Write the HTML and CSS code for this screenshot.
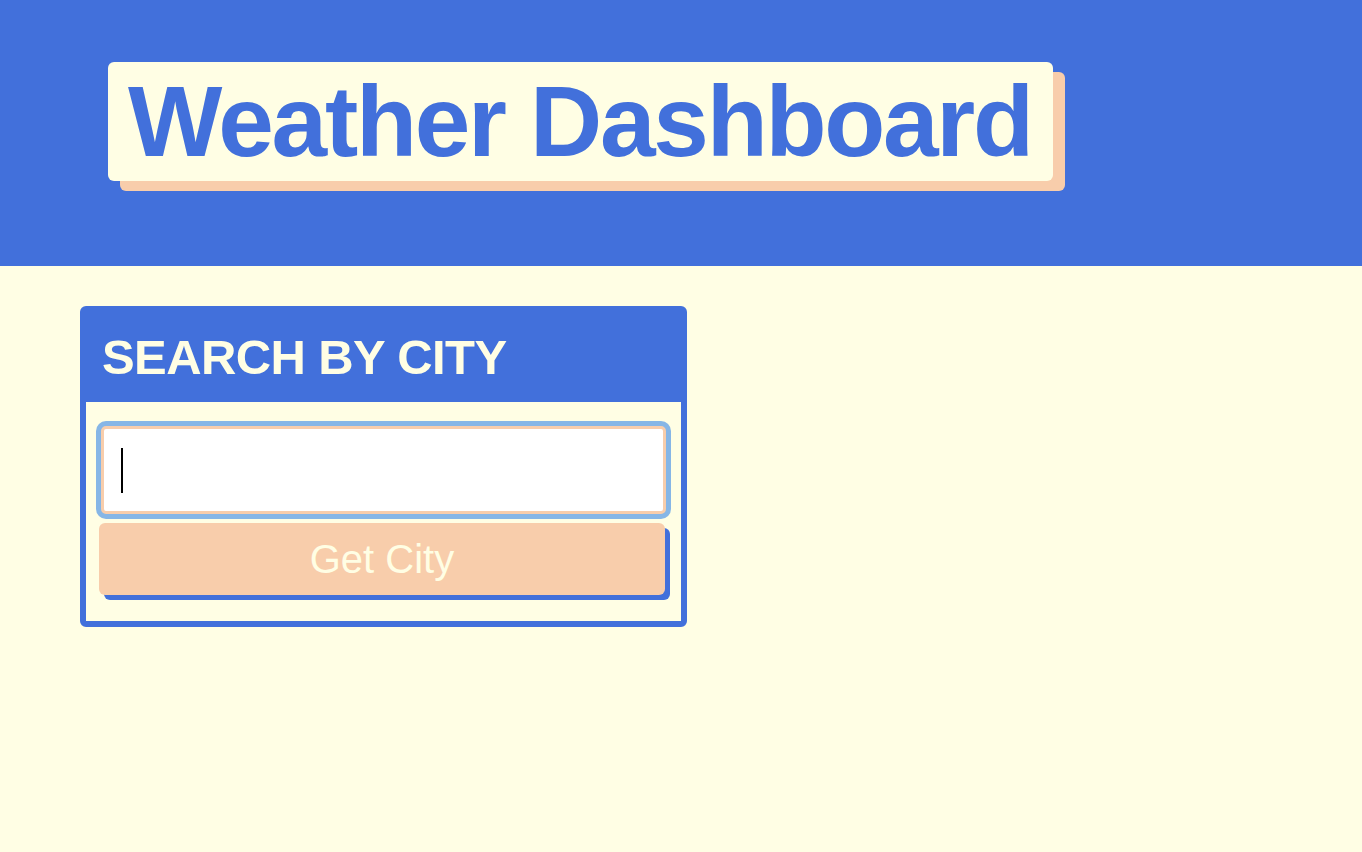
FILE: index.html
```html
<!DOCTYPE html>
<html lang="en">
<head>
<meta charset="utf-8">
<title>Weather Dashboard</title>
<link rel="stylesheet" href="styles.css">
</head>
<body>
<header class="topbar">
  <h1 class="title">Weather Dashboard</h1>
</header>
<main class="content">
  <section class="card">
    <h2 class="card-head">SEARCH BY CITY</h2>
    <form class="card-body">
      <div class="field">
        <input class="city-input" type="text" aria-label="City">
        <span class="caret"></span>
      </div>
      <button class="get-btn" type="button">Get City</button>
    </form>
  </section>
</main>
</body>
</html>
```
FILE: styles.css
```css
* { box-sizing: border-box; }
html, body {
  margin: 0;
  padding: 0;
  background: #FFFEE4;
  font-family: "Liberation Sans", Arial, sans-serif;
}
.topbar {
  background: #4270DB;
  height: 266px;
  padding: 62px 0 0 108px;
}
.title {
  display: inline-block;
  margin: 0;
  background: #FFFEE4;
  color: #4270DB;
  font-weight: 700;
  font-size: 100px;
  line-height: 115px;
  letter-spacing: -2.3px;
  padding: 2px 21px 2px 20px;
  border-radius: 6px;
  box-shadow: 12px 10px 0 #F8CDAB;
}
.content {
  padding: 40px 0 0 80px;
}
.card {
  width: 607px;
  border: 6px solid #4270DB;
  border-radius: 6px;
  background: #FFFEE4;
}
.card-head {
  margin: 0;
  height: 90px;
  display: flex;
  align-items: center;
  padding-left: 16px;
  background: #4270DB;
  color: #FFFEE4;
  font-weight: 700;
  font-size: 49px;
  letter-spacing: -0.6px;
}
.card-body {
  margin: 0;
  padding: 24px 16px 26px 13px;
  display: flex;
  flex-direction: column;
  align-items: flex-start;
}
.field {
  position: relative;
  margin-left: 2px;
}
.city-input {
  display: block;
  width: 565px;
  height: 88px;
  border: 3px solid #F8CDAB;
  border-radius: 5px;
  background: #FFFFFF;
  box-shadow: 0 0 0 5px #86B6E6;
  outline: none;
  padding: 0 17px;
  font-size: 40px;
  font-family: "Liberation Sans", Arial, sans-serif;
  caret-color: transparent;
}
.caret {
  position: absolute;
  left: 20px;
  top: 22px;
  width: 2px;
  height: 45px;
  background: #000;
}
.get-btn {
  margin-top: 9px;
  width: 566px;
  height: 72px;
  border: none;
  border-radius: 6px;
  background: #F8CDAB;
  color: #FFFEE4;
  font-family: "Liberation Sans", Arial, sans-serif;
  font-size: 40px;
  box-shadow: 5px 5px 0 #4270DB;
  padding: 0;
}
```
